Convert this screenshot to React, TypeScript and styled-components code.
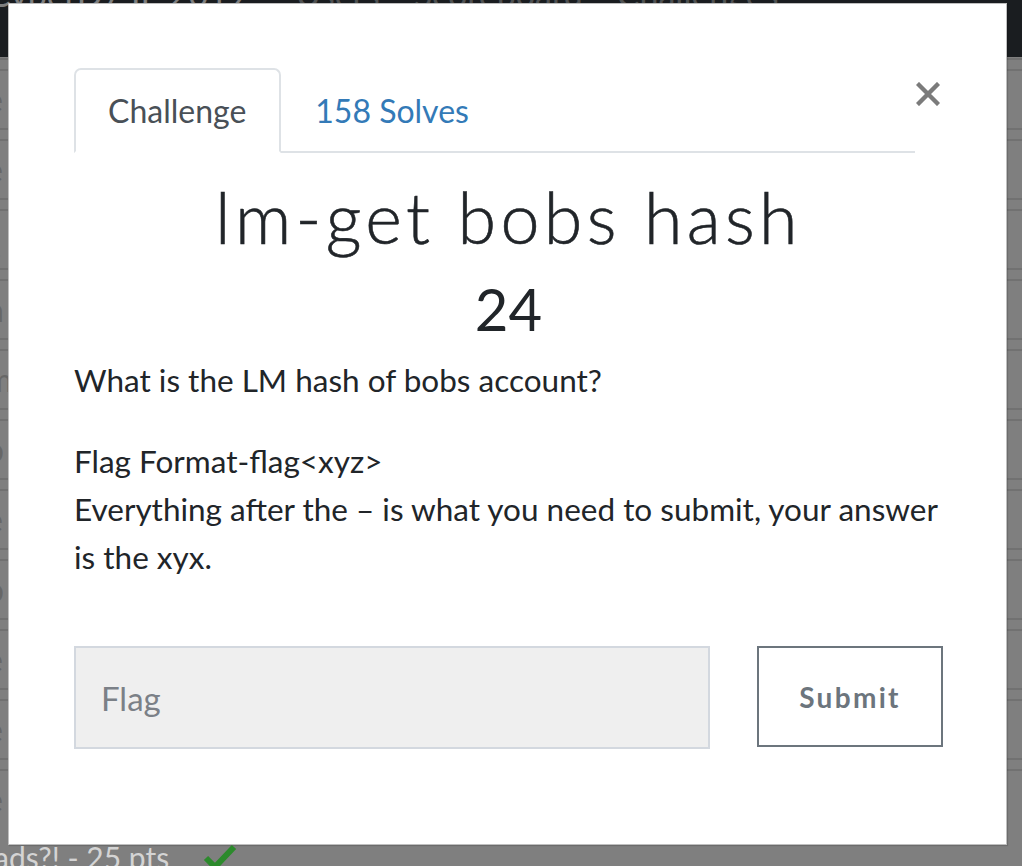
import React from 'react';
import styled, { createGlobalStyle } from 'styled-components';

const GlobalStyle = createGlobalStyle`
  html, body { margin: 0; padding: 0; }
  body {
    width: 1022px;
    height: 866px;
    overflow: hidden;
    background: #ffffff;
    font-family: Lato, "Noto Sans", sans-serif;
  }
  * { box-sizing: border-box; }
`;

const Page = styled.div`
  position: relative;
  width: 1022px;
  height: 866px;
  overflow: hidden;
`;

const Navbar = styled.nav`
  height: 57px;
  background: #343a40;
  overflow: hidden;
`;

const NavInner = styled.div`
  display: flex;
  align-items: baseline;
  margin-top: -27px;
  margin-left: -12px;
  font-size: 34px;
  white-space: nowrap;
`;

const Brand = styled.span`
  color: #ffffff;
  margin-right: 48px;
`;

const NavLink = styled.span`
  color: rgba(255, 255, 255, 0.55);
  margin-right: 34px;
`;

const Rows = styled.div`
  display: flex;
  flex-direction: column;
  margin-top: 1px;
`;

const Row = styled.div`
  height: 70px;
  border-top: 2px solid #e3e3e3;
  display: flex;
  flex-direction: column;
`;

const RowInner = styled.div`
  margin-top: 9px;
  border-top: 2px solid #e3e3e3;
  flex: 1;
  display: flex;
  align-items: center;
`;

const RowText = styled.span`
  font-size: 32px;
  color: #cfcfcf;
  margin-left: -14px;
`;

const FooterRow = styled.div`
  display: flex;
  align-items: center;
  gap: 34px;
  margin-left: -14px;
  font-size: 30px;
  color: #d4d4d4;
  margin-top: -6px;
`;

const Check = styled.svg`
  width: 34px;
  height: 30px;
`;

const Overlay = styled.div`
  position: absolute;
  inset: 0;
  background: rgba(0, 0, 0, 0.5);
  padding: 3px 0 0 8px;
`;

const Modal = styled.div`
  width: 999px;
  height: 842px;
  background: #ffffff;
  border: 1px solid rgba(0, 0, 0, 0.25);
  box-shadow: 1px 1px 1px rgba(0, 0, 0, 0.15);
  padding: 64px 63px 0 65px;
  display: flex;
  flex-direction: column;
`;

const Header = styled.div`
  display: flex;
  align-items: flex-start;
`;

const Tabs = styled.div`
  flex: 1;
  display: flex;
  border-bottom: 2px solid #dee2e6;
`;

const Tab = styled.div<{ $active?: boolean }>`
  font-size: 32px;
  line-height: 45px;
  padding: 18px 33px 18px 32px;
  margin-bottom: -2px;
  border: 2px solid ${(p) => (p.$active ? '#dee2e6' : 'transparent')};
  border-bottom-color: ${(p) => (p.$active ? '#ffffff' : 'transparent')};
  border-radius: 7px 7px 0 0;
  background: ${(p) => (p.$active ? '#ffffff' : 'transparent')};
  color: ${(p) => (p.$active ? '#495057' : '#337ab7')};
`;

const Close = styled.button`
  width: 28px;
  margin-top: 14px;
  padding: 0 0 0 1px;
  border: none;
  background: transparent;
  display: flex;
  justify-content: flex-start;
`;

const Title = styled.h2`
  margin: 26px 0 0;
  text-align: center;
  font-weight: 300;
  font-size: 70px;
  line-height: 76px;
  letter-spacing: 4.3px;
  color: #212529;
  -webkit-text-stroke: 0.6px #212529;
`;

const Points = styled.h3`
  margin: 21px 0 0;
  text-align: center;
  font-weight: 400;
  font-size: 58px;
  line-height: 66px;
  color: #212529;
`;

const Description = styled.div`
  margin-top: 14px;
  font-size: 31.5px;
  line-height: 48px;
  color: #212529;
`;

const Para = styled.p`
  margin: 0 0 33px;
`;

const Form = styled.div`
  display: flex;
  align-items: flex-start;
  margin-top: 32px;
`;

const Input = styled.input`
  width: 636px;
  height: 103px;
  background: #efefef;
  border: 2px solid #d3d8df;
  padding: 0 25px;
  font-family: Lato, "Noto Sans", sans-serif;
  font-size: 33px;
  color: #495057;
  outline: none;
  &::placeholder {
    color: #7b8087;
  }
`;

const Submit = styled.button`
  margin-left: auto;
  width: 186px;
  height: 101px;
  border: 2px solid #6c757d;
  background: #ffffff;
  font-family: Lato, "Noto Sans", sans-serif;
  font-weight: 700;
  font-size: 28px;
  letter-spacing: 2.3px;
  color: #6c757d;
`;

export default function App() {
  return (
    <>
      <GlobalStyle />
      <Page>
        <Navbar>
          <NavInner>
            <Brand>CyberD7 IE 2019</Brand>
            <NavLink>Users</NavLink>
            <NavLink>Scoreboard</NavLink>
            <NavLink>Challenges</NavLink>
          </NavInner>
        </Navbar>
        <Rows>
          {['Cookie', 'Whale', 'Sudo_', 'Admin', 'Team', 'Lamb', 'Grade', 'Bob', 'Note', 'Time', 'Page'].map((t) => (
            <Row key={t}>
              <RowInner>
                <RowText>{t.slice(-1)}</RowText>
              </RowInner>
            </Row>
          ))}
        </Rows>
        <Overlay>
          <Modal>
            <Header>
              <Tabs>
                <Tab $active>Challenge</Tab>
                <Tab>158 Solves</Tab>
              </Tabs>
              <Close aria-label="Close">
                <svg width="24" height="24" viewBox="0 0 24 24">
                  <path d="M3 3 L21 21 M21 3 L3 21" stroke="#7b7b7b" strokeWidth="4.4" strokeLinecap="square" />
                </svg>
              </Close>
            </Header>
            <Title>lm-get bobs hash</Title>
            <Points>24</Points>
            <Description>
              <Para>What is the LM hash of bobs account?</Para>
              <Para>
                Flag Format-flag&lt;xyz&gt;
                <br />
                Everything after the – is what you need to submit, your answer is the xyx.
              </Para>
            </Description>
            <Form>
              <Input placeholder="Flag" />
              <Submit>Submit</Submit>
            </Form>
          </Modal>
          <FooterRow>
            <span>ads?! - 25 pts</span>
            <Check viewBox="0 0 34 30">
              <path d="M3 16 L12 25 L31 5" fill="none" stroke="#2c8a2c" strokeWidth="6" />
            </Check>
          </FooterRow>
        </Overlay>
      </Page>
    </>
  );
}
